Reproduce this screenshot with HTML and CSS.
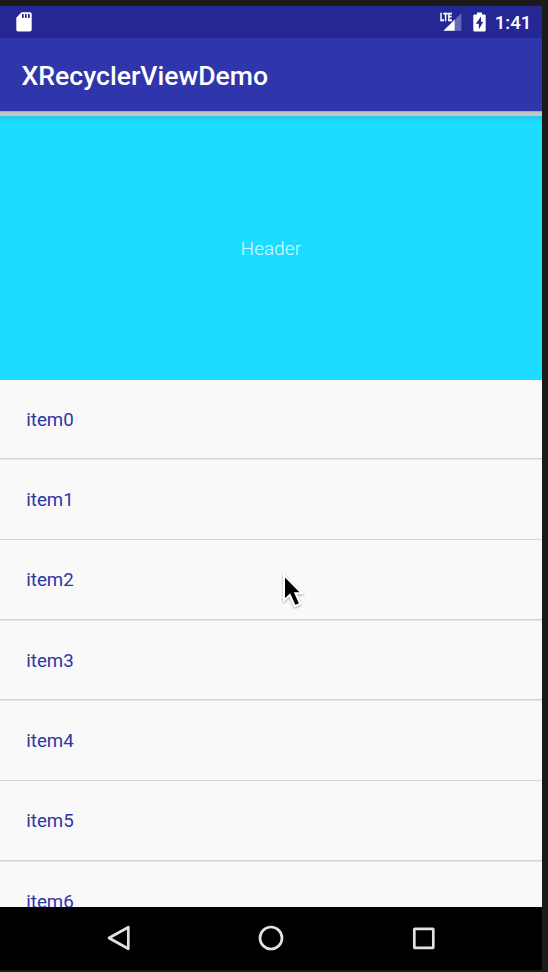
FILE: index.html
```html
<!DOCTYPE html>
<html lang="en">
<head>
<meta charset="utf-8">
<title>XRecyclerViewDemo</title>
<link rel="stylesheet" href="styles.css">
</head>
<body>
<div class="phone">
  <div class="status">
    <svg class="sd" width="16" height="20" viewBox="0 0 16 20"><path fill="#fff" fill-rule="evenodd" d="M5.5.3H14q1.7 0 1.7 1.7v15.8q0 1.7-1.7 1.7H2q-1.7 0-1.7-1.7V5.7zM6 2v4h1.7V2zM9 2v4h1.7V2zM12 2v4h1.7V2z"/></svg>
    <div class="signal">
      <svg width="24" height="20" viewBox="0 0 24 20"><path fill="#6668bb" d="M22.3 1.2v17.6H4.500z"/><path fill="#fff" d="M15.600 7.800v11H4.500z"/></svg>
      <span class="lte">LTE</span>
    </div>
    <svg class="battery" width="13" height="20" viewBox="0 0 13 20"><path fill="#fff" fill-rule="evenodd" d="M4 .5h5v2h2.4q1.3 0 1.3 1.3v14.4q0 1.3-1.3 1.3H1.6Q.3 19.5.3 18.2V3.8Q.3 2.5 1.6 2.5H4zM8 4.500L2.800 11.800h3V17.500L10.300 9.700H8z"/></svg>
    <span class="clock">1:41</span>
  </div>
  <header class="appbar"><h1>XRecyclerViewDemo</h1></header>
  <main class="list">
    <div class="banner">Header</div>
    <div class="item">item0</div>
    <div class="item">item1</div>
    <div class="item">item2</div>
    <div class="item">item3</div>
    <div class="item">item4</div>
    <div class="item">item5</div>
    <div class="item">item6</div>
  </main>
  <nav class="nav">
    <svg width="28" height="28" viewBox="0 0 28 28"><path d="M23.3 3.2v21.6L4 14z"/></svg>
    <svg width="28" height="28" viewBox="0 0 28 28"><circle cx="14" cy="14" r="11"/></svg>
    <svg width="28" height="28" viewBox="0 0 28 28"><rect x="4.3" y="4.8" width="19" height="19" rx=".5"/></svg>
  </nav>
</div>
<svg class="cursor" width="28" height="38" viewBox="0 0 28 38"><path d="M3 2v25.5l5.8-5.5 5 11.2 5.400-2.400-4.800-10.500h6.500z"/></svg>
</body>
</html>
```
FILE: styles.css
```css
* { box-sizing: border-box; }
body {
  margin: 0;
  height: 972px;
  padding: 6px 6px 2px 0;
  overflow: hidden;
  background: #1b1b1b;
  font-family: Roboto, sans-serif;
}
.phone {
  display: flex;
  flex-direction: column;
  height: 964px;
}
.status {
  display: flex;
  flex: none;
  align-items: center;
  height: 32px;
  padding: 0 10.5px 0 16px;
  background: #252794;
  color: #fff;
}
.signal { position: relative; height: 20px; margin-left: auto; margin-right: 10px; }
.signal svg { display: block; }
.lte {
  position: absolute;
  left: 1px;
  top: 0;
  font: 700 11px/11px "Roboto", sans-serif;
  -webkit-text-stroke: .3px #fff;
  transform: scaleX(.68);
  transform-origin: 0 0;
}
.clock {
  margin-left: 9px;
  padding-top: 1px;
  font-size: 18.7px;
  font-weight: 500;
  line-height: 32px;
}
.appbar {
  display: flex;
  flex: none;
  align-items: center;
  height: 73px;
  padding-left: 21.5px;
  padding-top: 2px;
  background: #2f36ab;
}
.appbar h1 {
  margin: 0;
  color: #fff;
  font-size: 26.6px;
  font-weight: 500;
}
.list {
  flex: 1;
  min-height: 0;
  overflow: hidden;
  padding-top: 5px;
  background: linear-gradient(#8f92bd 0, #bfc0c3 1px, #c9c9ca 5px, #f9f9f9 5px);
}
.banner {
  display: flex;
  align-items: center;
  justify-content: center;
  height: 263.5px;
  padding-top: 1.5px;
  background: linear-gradient(#1fc9ec, #1edcff 7px);
  color: #dcfdff;
  font-size: 18.7px;
  font-weight: 300;
  letter-spacing: .2px;
}
.item {
  height: 80.35px;
  padding-left: 26.3px;
  background: linear-gradient(#d5d5d6, #d5d5d6) 0 100% / 100% 1.5px no-repeat;
  color: #2d36a6;
  font-size: 18.7px;
  line-height: 81.8px;
}
.nav {
  display: flex;
  flex: none;
  align-items: center;
  justify-content: center;
  gap: 124.5px;
  height: 63px;
  padding-bottom: 1px;
  background: #000;
}
.nav svg { fill: none; stroke: #e2e2e2; stroke-width: 2.7; stroke-linejoin: round; }
.cursor {
  position: absolute;
  left: 281px;
  top: 573px;
  fill: #000;
  stroke: #fff;
  stroke-width: 2;
  filter: drop-shadow(0 1px 1px rgba(0, 0, 0, .35));
}
```
